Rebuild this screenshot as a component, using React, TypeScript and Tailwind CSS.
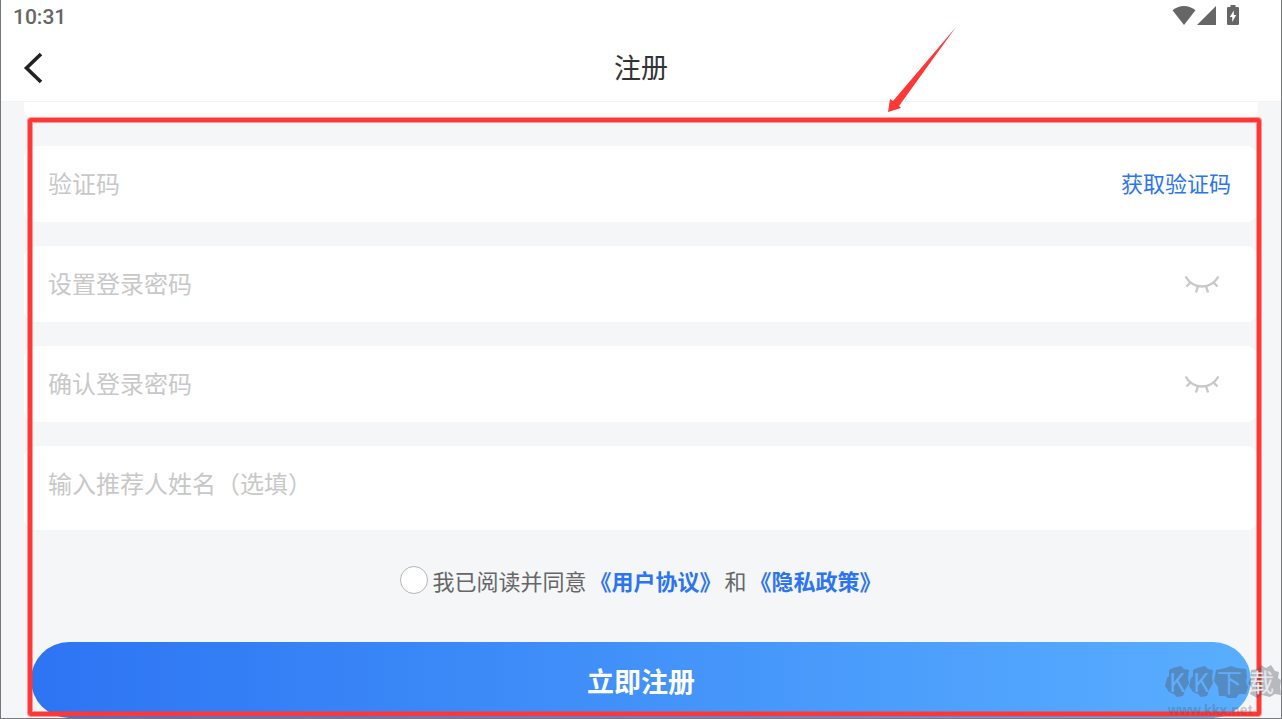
import { useState } from 'react';

function StatusBar() {
  return (
    <div className="flex h-8 items-center justify-between pl-3 pr-[42px] text-[#666666]">
      <span className="pt-0.5 font-[Roboto,sans-serif] text-[21px] leading-8 font-medium">10:31</span>
      <div className="flex items-center" aria-hidden="true">
        <svg className="h-6 w-6" viewBox="0 0 24 24" fill="currentColor">
          <path d="M0.500 6.300C3.800 3.600 7.600 2 12 2S20.200 3.600 23.500 6.300L12 21Z" />
        </svg>
        <svg className="ml-px h-6 w-5" viewBox="0 0 20 24" fill="currentColor">
          <path d="M0 21L19 2V21Z" />
        </svg>
        <svg className="ml-[10px] h-6 w-3" viewBox="0 0 12 24" fill="currentColor" fillRule="evenodd">
          <path d="M3.500 1H8.500V3H10.800Q12 3 12 4.200V19.800Q12 21 10.800 21H1.200Q0 21 0 19.800V4.200Q0 3 1.200 3H3.500ZM6.800 6.500L2.800 13H5.200V18L9.200 11H6.800Z" />
        </svg>
      </div>
    </div>
  );
}

function ClosedEye() {
  return (
    <svg className="h-5 w-9" viewBox="0 0 36 20" fill="none" stroke="#c9c9c9" strokeWidth="2.400" aria-hidden="true">
      <path d="M1.500 2.500C5.500 9.100 11 12.500 18 12.500S30.500 9.100 34.500 2.500" />
      <path d="M6.500 8.500L2.500 12.500M14 12L12 18.500M22 12L24 18.500M29.500 8.500L33.500 12.500" />
    </svg>
  );
}

function Field({ id, label, secret }: { id: string; label: string; secret?: boolean }) {
  const [shown, setShown] = useState(false);
  return (
    <div className="flex h-[76px] items-center">
      <input
        id={id}
        aria-label={label}
        placeholder={label}
        type={secret && !shown ? 'password' : 'text'}
        className="h-full min-w-0 flex-1 bg-transparent pb-1 pl-6 text-[24px] text-[#333333] outline-none placeholder:text-[#c8c8c8]"
      />
      {secret && (
        <button type="button" aria-label="显示密码" onClick={() => setShown(!shown)} className="mr-[38px]">
          <ClosedEye />
        </button>
      )}
    </div>
  );
}

function Watermark() {
  return (
    <div className="pointer-events-none absolute right-0 bottom-0 h-[54px] w-[116px] select-none">
      <svg className="absolute inset-0 h-full w-full" viewBox="0 -1 116 54" fill="#4b4f55" fillOpacity="0.36" aria-hidden="true">
        <path d="M4 5L8 3L16 1L19 4L24 5L23 13L24 18L20 25L18 31L12 32L9 29L4 27L0 21L2 13L4 11Z" />
        <path d="M28 5L32 3L40 1L43 4L48 5L47 13L48 18L44 25L42 31L36 32L33 29L28 27L24 21L26 13L28 11Z" />
        <path d="M51 5L60 3L66 1L72 3L81 4L82 12L81 17L83 22L81 29L74 29L71 33L63 33L60 31L54 31L53 22L49 16L50 11Z" />
        <path d="M86 5L93 4L96 0L101 3L106 0L110 6L114 7L113 13L116 15L115 22L116 30L110 29L105 32L97 30L92 33L85 29L87 23L83 18L86 13Z" />
      </svg>
      <div className="absolute top-1 left-1 flex text-[25px] leading-[27px] text-[#61adf9]">
        <span className="w-6">K</span>
        <span className="w-6">K</span>
        <span className="w-8">下</span>
        <span className="text-[#e6e9ed]">载</span>
      </div>
      <span className="absolute bottom-0 left-[3px] font-['Liberation_Sans',sans-serif] text-[14px] leading-4 font-bold text-[#4b4f55]/30">
        www.kkx.net
      </span>
    </div>
  );
}

export default function App() {
  return (
    <div className="relative flex h-screen flex-col overflow-hidden border-x border-b border-[#77787b] bg-[#f4f6f8] font-['Noto_Sans_CJK_SC',sans-serif]">
      <header className="shrink-0 border-b border-[#f3f3f4] bg-white">
        <StatusBar />
        <div className="grid h-[69px] grid-cols-[60px_1fr_60px] items-center pt-0.5">
          <button type="button" aria-label="返回" className="pl-[21px]">
            <svg className="h-8 w-6" viewBox="0 0 24 32" fill="none" stroke="#222222" strokeWidth="3.600" aria-hidden="true">
              <path d="M19 2L4.500 16L19 30" />
            </svg>
          </button>
          <h1 className="text-center text-[27px] text-[#333333]">注册</h1>
        </div>
      </header>

      <form className="flex flex-col px-[23px]" onSubmit={(e) => e.preventDefault()}>
        <div className="h-[18px] rounded-b-xl bg-white" />
        <div className="mt-[26px] flex flex-col gap-6">
          <div className="flex items-center rounded-xl bg-white">
            <div className="flex-1">
              <Field id="code" label="验证码" />
            </div>
            <button type="button" className="mr-[27px] pb-1 text-[22px] text-[#2d74f3]">
              获取验证码
            </button>
          </div>
          <div className="rounded-xl bg-white">
            <Field id="password" label="设置登录密码" secret />
          </div>
          <div className="rounded-xl bg-white">
            <Field id="confirm" label="确认登录密码" secret />
          </div>
          <div className="rounded-xl bg-white pb-2">
            <Field id="referrer" label="输入推荐人姓名（选填）" />
          </div>
        </div>

        <div className="mt-9 flex h-7 items-center justify-center text-[22px] text-[#666666]">
          <input
            id="agree"
            type="checkbox"
            className="mr-1 size-7 appearance-none rounded-full border border-[#b5b5b5] bg-white checked:bg-[#2d74f3]"
          />
          <div className="flex gap-[3px]">
            <label htmlFor="agree">我已阅读并同意</label>
            <a href="#terms" className="font-bold text-[#2d74f3]">《用户协议》</a>
            <span>和</span>
            <a href="#privacy" className="font-bold text-[#2d74f3]">《隐私政策》</a>
          </div>
        </div>

        <button
          type="submit"
          className="mx-[7px] mt-12 h-[76px] rounded-full bg-linear-to-r from-[#2d74f3] to-[#5aaeff] pt-0.5 text-[27px] font-bold text-white"
        >
          立即注册
        </button>
      </form>

      <div className="pointer-events-none absolute top-[118px] right-5 bottom-[2px] left-[27px] rounded-[3px] border-4 border-[#ff3736] shadow-[0_0_0_1px_#ff373680,inset_0_0_0_1px_#ff373680]" />
      <svg className="pointer-events-none absolute top-[26px] left-[69.200%] h-[87px] w-[70px]" viewBox="0 0 70 87" fill="#ff3736" aria-hidden="true">
        <path d="M69 1L12 80L14 82L1 86L3 73L6 75Z" />
      </svg>
      <Watermark />
    </div>
  );
}
